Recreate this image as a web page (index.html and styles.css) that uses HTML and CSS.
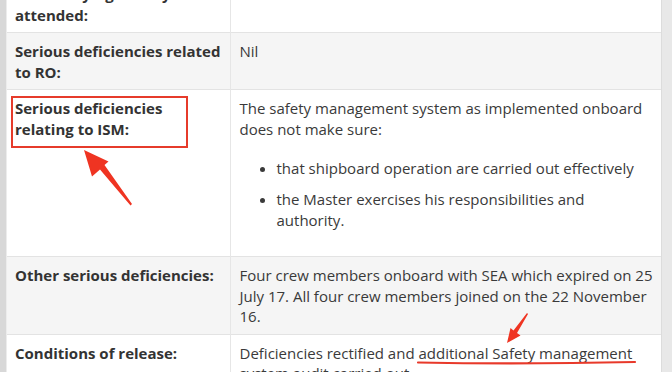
FILE: index.html
```html
<!DOCTYPE html>
<html>
<head>
<meta charset="utf-8">
<link rel="stylesheet" href="styles.css">
</head>
<body>
<div class="page">
  <div class="side side-left"></div>
  <div class="main">
    <table class="report">
      <colgroup><col class="col-label"><col class="col-value"></colgroup>
      <tr class="row">
        <th>RO surveying society attended:</th>
        <td>Yes</td>
      </tr>
      <tr class="row alt">
        <th>Serious deficiencies related to RO:</th>
        <td>Nil</td>
      </tr>
      <tr class="row">
        <th><span class="label-ism">Serious deficiencies relating to ISM:</span></th>
        <td>
          <p>The safety management system as implemented onboard does not make sure:</p>
          <ul>
            <li>that shipboard operation are carried out effectively</li>
            <li>the Master exercises his responsibilities and authority.</li>
          </ul>
        </td>
      </tr>
      <tr class="row alt">
        <th>Other serious deficiencies:</th>
        <td>Four crew members onboard with SEA which expired on 25 July 17. All four crew members joined on the 22 November 16.</td>
      </tr>
      <tr class="row last">
        <th>Conditions of release:</th>
        <td>Deficiencies rectified and <span class="mark">additional Safety management</span> system audit carried out.</td>
      </tr>
    </table>
  </div>
  <div class="side side-right"></div>
</div>
<svg class="annot" width="672" height="372" viewBox="0 0 672 372">
  <rect x="12" y="97" width="175" height="50" fill="none" stroke="#e63b2b" stroke-width="2"/>
  <polygon points="84,150 108.5,161.5 104.5,165 132,204 130.5,205.5 100,169.5 92,176.5" fill="#ef3422"/>
  <polygon points="507,343 510.5,328 513.5,330.5 527,313 528,314 517,333 520.5,335.5" fill="#ef3422"/>
  <path d="M418 362.5 Q 520 364.5 635 362" fill="none" stroke="#e8392a" stroke-width="2.2" stroke-linecap="round"/>
</svg>
</body>
</html>
```

FILE: styles.css
```css
* { box-sizing: border-box; }
html, body { margin: 0; padding: 0; }
body {
  width: 672px;
  height: 372px;
  overflow: hidden;
  background: #fff;
  font-family: "Open Sans", "Liberation Sans", sans-serif;
  font-size: 15px;
  line-height: 20.5px;
  color: #3a3a3a;
}
.page {
  display: flex;
  height: 372px;
}
.side-left {
  flex: 0 0 6px;
  background: #d8d8d8;
}
.side-right {
  flex: 0 0 11px;
  background: #e8e8e8;
  border-left: 1px solid #dcdcdc;
}
.main {
  flex: 1 1 auto;
  border-left: 1px solid #ececec;
  overflow: hidden;
}
.report {
  width: 100%;
  margin-top: -25px;
  border-collapse: collapse;
  table-layout: fixed;
}
.col-label { width: 223px; }
.row { border-top: 1px solid #e3e3e3; }
.row.alt { background: #f5f5f5; }
.report th,
.report td {
  vertical-align: top;
  text-align: left;
  padding: 8px 9px 7px 8px;
}
.report th {
  font-weight: 700;
  color: #333;
  border-right: 1px solid #e6e6e6;
}
.report td { padding-left: 9px; padding-right: 2px; }
.row.last th,
.row.last td { padding-bottom: 40px; }
.report p { margin: 0; }
.report ul {
  margin: 19px 0 19px 0;
  padding-left: 37px;
  padding-right: 18px;
}
.report li + li { margin-top: 10.5px; }
.annot {
  position: absolute;
  left: 0;
  top: 0;
  pointer-events: none;
}
```
